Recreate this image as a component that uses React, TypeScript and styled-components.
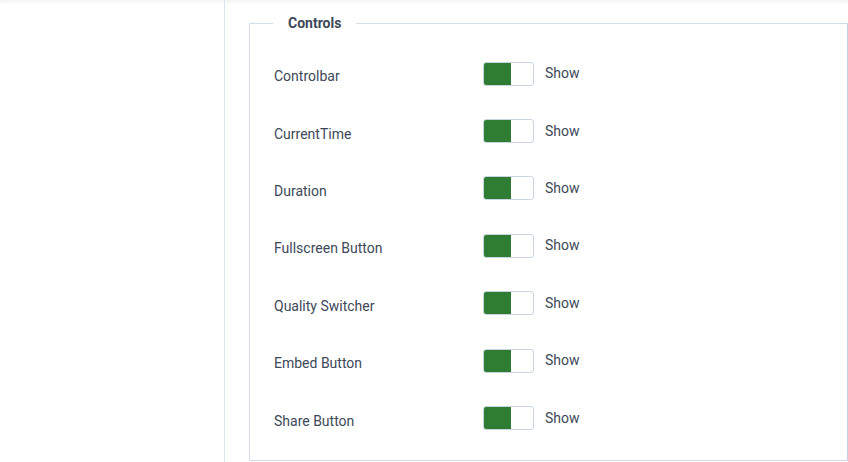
import React from "react";
import styled, {createGlobalStyle} from "styled-components";

const colors = {
    text: "#3c4858",
    border: "#d3deeb",
    green: "#2e7d32",
    toggleBorder: "#c9d5e3",
};

const items = [
    "Controlbar",
    "CurrentTime",
    "Duration",
    "Fullscreen Button",
    "Quality Switcher",
    "Embed Button",
    "Share Button",
];

const App = () => {
    return (
        <>
            <GlobalStyle/>
            <Page>
                <Sidebar/>
                <Main>
                    <Fieldset>
                        <Legend>Controls</Legend>
                        {items.map((name) => (
                            <Row key={name}>
                                <Label>{name}</Label>
                                <Toggle aria-label={name}>
                                    <ToggleFill/>
                                </Toggle>
                                <State>Show</State>
                            </Row>
                        ))}
                    </Fieldset>
                </Main>
            </Page>
        </>
    );
};

const GlobalStyle = createGlobalStyle`
  html, body {
    margin: 0;
    padding: 0;
    background: #ffffff;
    font-family: Roboto, "Liberation Sans", sans-serif;
  }
`;

const Page = styled.div`
  display: flex;
  width: 848px;
  height: 462px;
  overflow: hidden;
  background: #ffffff;
  box-shadow: inset 0 4px 4px -3px rgba(0, 0, 0, 0.08);
`;

const Sidebar = styled.aside`
  width: 224px;
  flex: none;
  border-right: 1px solid #dde5ef;
`;

const Main = styled.main`
  flex: 1;
  padding: 15px 0 0 24px;
  display: flex;
  flex-direction: column;
`;

const Fieldset = styled.fieldset`
  margin: 0;
  padding: 15px 0 12px 24px;
  border: 1px solid ${colors.border};
  border-right-color: #c4d2e3;
  min-width: 0;
`;

const Legend = styled.legend`
  margin-left: -1px;
  padding: 0 15px;
  font-size: 14px;
  font-weight: 700;
  line-height: 16px;
  color: ${colors.text};
`;

const Row = styled.div`
  display: flex;
  align-items: center;
  height: 57.4px;
`;

const Label = styled.span`
  width: 210px;
  font-size: 14px;
  color: ${colors.text};
  padding-top: 3px;
`;

const Toggle = styled.div`
  display: flex;
  width: 49px;
  height: 22px;
  margin: 0 0 2px -1px;
  border: 1px solid ${colors.toggleBorder};
  border-radius: 3px;
  overflow: hidden;
  background: #ffffff;
`;

const ToggleFill = styled.span`
  width: 27px;
  background: ${colors.green};
`;

const State = styled.span`
  margin-left: 11px;
  font-size: 14px;
  color: ${colors.text};
  padding-bottom: 3px;
`;

export default App;
